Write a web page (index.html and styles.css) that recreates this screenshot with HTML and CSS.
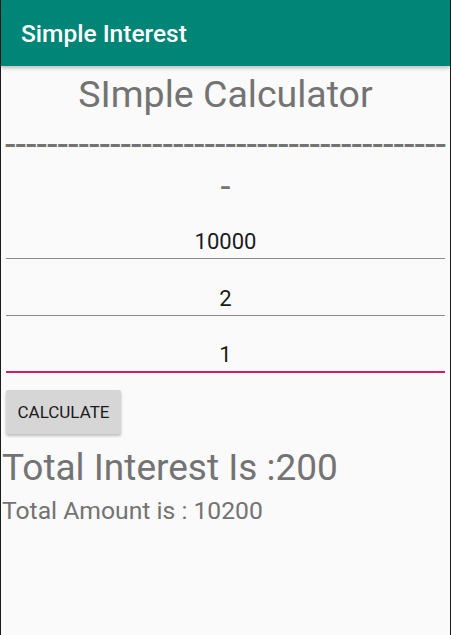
FILE: index.html
```html
<!DOCTYPE html>
<html>
<head>
<meta charset="utf-8">
<link rel="stylesheet" href="styles.css">
</head>
<body>
<div class="screen">
  <header class="toolbar"><span class="toolbar-title">Simple Interest</span></header>
  <main class="content">
    <div class="title">SImple Calculator</div>
    <div class="dashes">------------------------------------------</div>
    <div class="minus">-</div>
    <div class="field"><span>10000</span></div>
    <div class="field"><span>2</span></div>
    <div class="field field-focused"><span>1</span></div>
    <div class="actions"><button class="btn">CALCULATE</button></div>
    <div class="interest">Total Interest Is :200</div>
    <div class="amount">Total Amount is : 10200</div>
  </main>
</div>
</body>
</html>
```
FILE: styles.css
```css
html, body {
  margin: 0;
  padding: 0;
}
body {
  width: 451px;
  height: 635px;
  overflow: hidden;
  background: #fafafa;
  font-family: Roboto, "Liberation Sans", sans-serif;
}
.screen {
  box-sizing: border-box;
  width: 451px;
  height: 635px;
  border-left: 1px solid #1c1c1c;
  border-right: 1px solid #1c1c1c;
  background: #fafafa;
  display: flex;
  flex-direction: column;
}
.toolbar {
  height: 66px;
  flex: none;
  background: #008577;
  display: flex;
  align-items: center;
  padding-left: 20px;
  box-shadow: 0 2px 4px rgba(0,0,0,0.25);
  position: relative;
  z-index: 1;
}
.toolbar-title {
  color: #ffffff;
  font-size: 24.5px;
  font-weight: 500;
}
.content {
  display: flex;
  flex-direction: column;
}
.title {
  margin-top: 7px;
  text-align: center;
  font-size: 37.5px;
  line-height: 42px;
  color: #737373;
}
.dashes {
  margin-top: 8px;
  text-align: center;
  white-space: nowrap;
  overflow: hidden;
  font-size: 38px;
  line-height: 42px;
  color: #737373;
}
.minus {
  margin-top: 7px;
  text-align: center;
  font-size: 36px;
  line-height: 30px;
  color: #737373;
}
.field {
  margin: 0 5px;
  height: 57px;
  border-bottom: 1px solid #8a8a8a;
  display: flex;
  align-items: flex-end;
  justify-content: center;
  font-size: 22px;
  color: #1a1a1a;
  padding-bottom: 4px;
  box-sizing: border-box;
}
.field-focused {
  border-bottom: 2px solid #d81b60;
}
.actions {
  padding: 17px 5px 0;
}
.btn {
  display: block;
  height: 44px;
  width: 115px;
  border: none;
  border-radius: 2px;
  background: #d6d6d6;
  box-shadow: 0 2px 3px rgba(0,0,0,0.25);
  font-family: Roboto, "Liberation Sans", sans-serif;
  font-size: 17px;
  font-weight: 400;
  color: #1a1a1a;
  padding: 0;
}
.interest {
  margin-top: 13px;
  padding-left: 1px;
  font-size: 37px;
  line-height: 42px;
  color: #737373;
}
.amount {
  margin-top: 7px;
  padding-left: 1px;
  font-size: 24.7px;
  line-height: 30px;
  color: #737373;
}
```
